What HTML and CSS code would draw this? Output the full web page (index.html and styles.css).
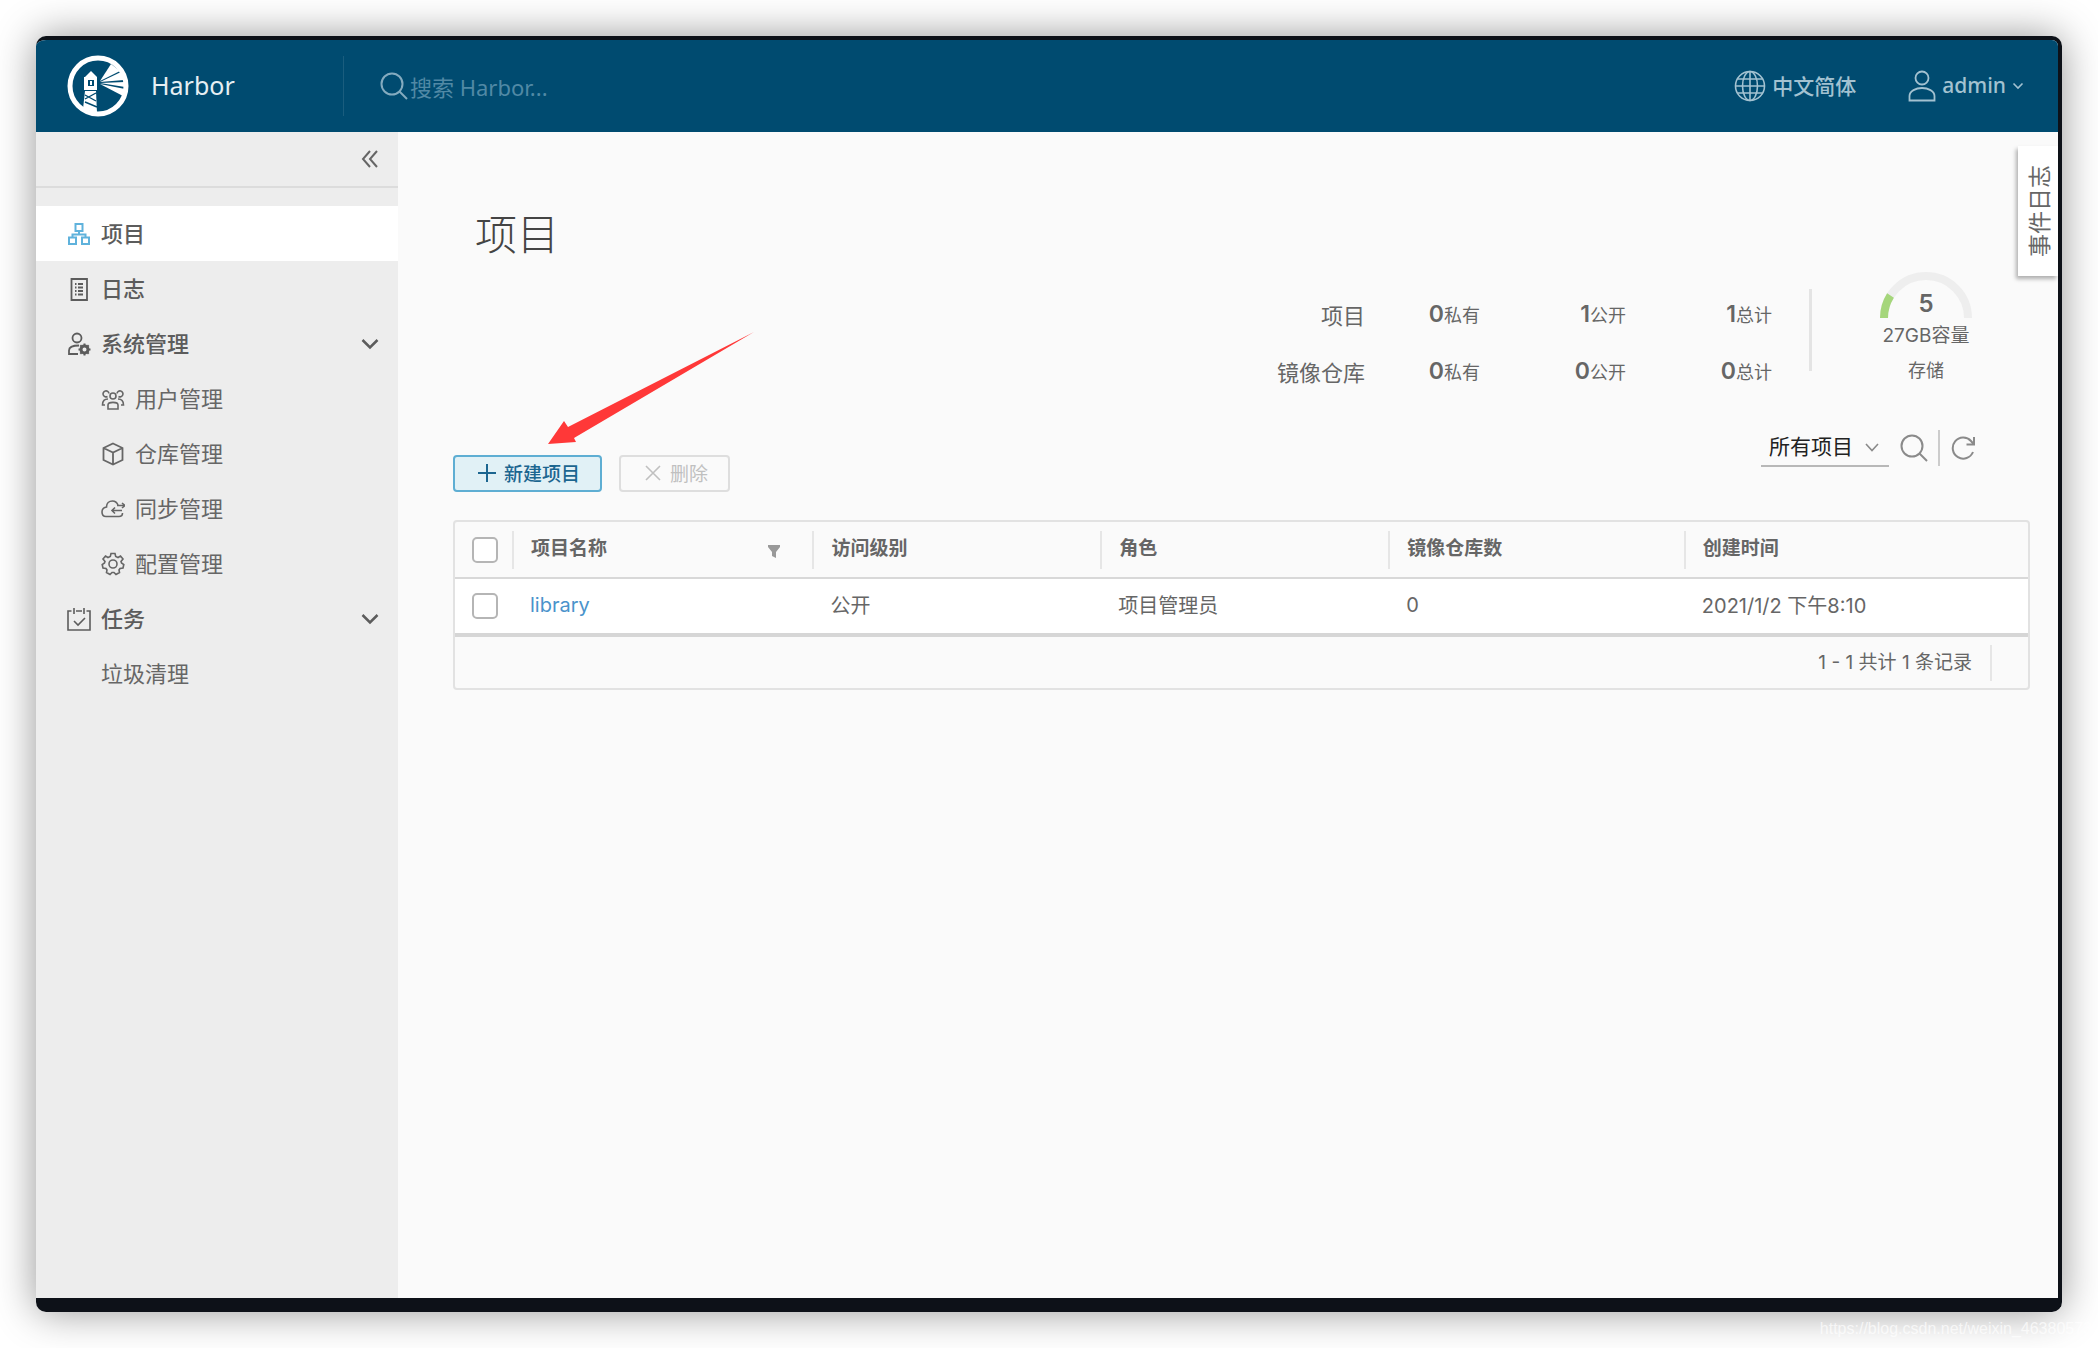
FILE: index.html
```html
<!DOCTYPE html>
<html lang="zh-CN">
<head>
<meta charset="utf-8">
<title>Harbor</title>
<link rel="stylesheet" href="styles.css">
</head>
<body>
<div class="window">
  <header class="header">
    <a class="brand" href="#">
      <svg class="logo" viewBox="0 0 62 62" fill="#fff">
        <circle cx="31" cy="31" r="28" fill="none" stroke="#fff" stroke-width="5"/>
        <path d="M33 26L44 9L53 16Z"/>
        <path d="M33 27L54 17L57 25Z"/>
        <path d="M33 28L58 27L58 32Z"/>
        <path d="M33 29L58 34L56 41Z"/>
        <path d="M24 16L30 22H18Z"/>
        <path d="M17 22H30V35H17Z"/>
        <path d="M21 25H27V31H21Z" fill="#004b70"/>
        <path d="M23 26H25V30H23Z"/>
        <path d="M18 36H29L30 58L16 54Z"/>
        <path d="M18 40L29 46M18 47L30 52M29 38L18 44" fill="none" stroke="#004b70" stroke-width="1.4"/>
      </svg>
      <span>Harbor</span>
    </a>
    <label class="search">
      <svg class="icon-search" viewBox="0 0 28 28" fill="none" stroke="currentColor" stroke-width="2"><circle cx="12" cy="12" r="10.5"/><path d="M19.500 19.500L27 27"/></svg>
      <input type="text" placeholder="搜索 Harbor..." aria-label="搜索 Harbor">
    </label>
    <button class="head-btn lang" type="button">
      <svg viewBox="0 0 32 32" width="32" height="32" fill="none" stroke="currentColor" stroke-width="1.6"><circle cx="16" cy="16" r="14.500"/><ellipse cx="16" cy="16" rx="7.500" ry="14.500"/><path d="M16 1.500V30.500M1.500 16H30.500M4 9H28M4 23H28"/></svg>
      <span>中文简体</span>
    </button>
    <button class="head-btn user" type="button">
      <svg viewBox="0 0 28 32" width="28" height="32" fill="none" stroke="currentColor" stroke-width="1.8"><circle cx="14" cy="8" r="6.500"/><path d="M1.500 30.500V26C1.500 21 8 18 14 18S26.500 21 26.500 26V30.500Z"/></svg>
      <span>admin</span>
      <svg class="caret" viewBox="0 0 12 8" width="12" height="8" fill="none" stroke="currentColor" stroke-width="1.6"><path d="M1.500 1.500L6 6L10.500 1.500"/></svg>
    </button>
  </header>
  <div class="body">
    <aside class="sidebar">
      <div class="collapse">
        <button type="button" aria-label="收起">
          <svg viewBox="0 0 18 18" width="18" height="18" fill="none" stroke="currentColor" stroke-width="2"><path d="M9 1L2 9L9 17M16 1L9 9L16 17"/></svg>
        </button>
      </div>
      <nav class="nav">
        <a class="item active" href="#">
          <svg viewBox="0 0 24 24" fill="none" stroke="#5fb2dc" stroke-width="2"><path d="M8.500 2H15.500V9H8.500ZM2 15.500H9V22H2ZM15 15.500H22V22H15ZM12 9V12M5.500 15.500V12.500H18.500V15.500"/></svg>
          <span>项目</span>
        </a>
        <a class="item" href="#">
          <svg viewBox="0 0 24 24" fill="none" stroke="currentColor" stroke-width="1.8"><path d="M4.500 2H20V23H4.500Z"/><path d="M8 7H9.500M11 7H16M8 10.500H9.500M11 10.500H16M8 14H9.500M11 14H16M8 17.500H9.500M11 17.500H16"/></svg>
          <span>日志</span>
        </a>
        <a class="item" href="#">
          <svg viewBox="0 0 24 24" fill="none" stroke="currentColor" stroke-width="1.800"><circle cx="10" cy="6" r="4.500"/><path d="M11 22H2V18.500C2 15 6 13.500 12 13.500"/><circle cx="17.500" cy="17.500" r="3.500" stroke-width="3"/><path d="M17.500 11.500V14M17.500 21V23.500M11.500 17.500H14M21 17.500H23.500M13.300 13.300L15 15M20 20L21.700 21.700M21.700 13.300L20 15M15 20L13.300 21.700" stroke-width="2"/></svg>
          <span>系统管理</span>
          <svg class="chev" viewBox="0 0 18 12" fill="none" stroke="currentColor" stroke-width="2.500"><path d="M1.500 2L9 9.500L16.500 2"/></svg>
        </a>
        <a class="item sub" href="#">
          <svg viewBox="0 0 24 24" fill="none" stroke="currentColor" stroke-width="1.600"><circle cx="12" cy="9" r="3"/><path d="M7 22V18C7 14.500 17 14.500 17 18V22Z"/><path d="M8 6.500A3 3 0 1 0 6.500 9.500M16 6.500A3 3 0 1 1 17.500 9.500M7 12C3.500 12 1.500 13.500 1.500 18H4M17 12C20.500 12 22.500 13.500 22.500 18H20"/></svg>
          <span>用户管理</span>
        </a>
        <a class="item sub" href="#">
          <svg viewBox="0 0 24 24" fill="none" stroke="currentColor" stroke-width="1.800"><path d="M12 1.500L21.500 6V18L12 22.500L2.500 18V6ZM2.500 6L12 10.500L21.500 6M12 10.500V22.500"/></svg>
          <span>仓库管理</span>
        </a>
        <a class="item sub" href="#">
          <svg viewBox="0 0 24 24" fill="none" stroke="currentColor" stroke-width="1.600"><path d="M17 8C15.500 4.500 13 4 11.500 4C8 4 5.500 6.500 5.500 10C2.500 10.500 1 12.500 1 15C1 17.500 2.500 19.500 5 19.500H18C20.500 19.500 21.500 18 21.500 16"/><path d="M24 8.500H16M21 6L24 8.500L21 11M11 13.500H21M14 10.500L11 13.500L14 16.500"/></svg>
          <span>同步管理</span>
        </a>
        <a class="item sub" href="#">
          <svg viewBox="0 0 24 24" fill="none" stroke="currentColor" stroke-width="1.600"><circle cx="12" cy="12" r="4"/><path d="M10 1.500H14L14.700 4.500L17 5.500L19.500 4L22 7L20 9.500L20.500 11L22.800 12.500L22 16L19 16.500L18 18L18.500 20.500L15 22.500L13 20.500H11L9 22.500L5.500 20.500L6 18L5 16.500L2 16L1.200 12.500L3.500 11L4 9.500L2 7L4.500 4L7 5.500L9.300 4.500Z"/></svg>
          <span>配置管理</span>
        </a>
        <a class="item" href="#">
          <svg viewBox="0 0 24 24" fill="none" stroke="currentColor" stroke-width="1.600"><path d="M4.500 4H1V23H23V4H19.500M9 4H15M7 1V7M17 1V7M7 14L11 18L18 11"/></svg>
          <span>任务</span>
          <svg class="chev" viewBox="0 0 18 12" fill="none" stroke="currentColor" stroke-width="2.500"><path d="M1.500 2L9 9.500L16.500 2"/></svg>
        </a>
        <a class="item plain" href="#"><span>垃圾清理</span></a>
      </nav>
    </aside>
    <main class="main">
      <h1>项目</h1>
      <section class="summary">
        <table class="stats">
          <tr><th scope="row">项目</th><td><b>0</b>私有</td><td><b>1</b>公开</td><td><b>1</b>总计</td></tr>
          <tr><th scope="row">镜像仓库</th><td><b>0</b>私有</td><td><b>0</b>公开</td><td><b>0</b>总计</td></tr>
        </table>
        <div class="rule"></div>
        <div class="quota">
          <div class="gauge">
            <svg viewBox="0 0 92 46" width="92" height="46" fill="none" stroke-width="8"><path d="M4 46A42 42 0 0 1 88 46" stroke="#eee"/><path d="M4 46A42 42 0 0 1 10.500 23.500" stroke="#a5d67b"/></svg>
            <b class="gauge-value">5</b>
          </div>
          <div class="capacity">27GB容量</div>
          <div class="storage">存储</div>
        </div>
      </section>
      <div class="toolbar">
        <button class="btn primary" type="button">
          <svg viewBox="0 0 20 20" width="20" height="20" fill="none" stroke="currentColor" stroke-width="2"><path d="M10 1V19M1 10H19"/></svg>新建项目
        </button>
        <button class="btn" type="button" disabled>
          <svg viewBox="0 0 20 20" width="20" height="20" fill="none" stroke="currentColor" stroke-width="1.600"><path d="M3 3L17 17M17 3L3 17"/></svg>删除
        </button>
        <div class="filters">
          <div class="select">
            <select aria-label="项目筛选"><option>所有项目</option></select>
            <svg viewBox="0 0 14 9" width="14" height="9" fill="none" stroke="currentColor" stroke-width="1.600"><path d="M1 1L7 7.500L13 1"/></svg>
          </div>
          <button class="tool" type="button" aria-label="搜索"><svg class="icon-search" viewBox="0 0 28 28" fill="none" stroke="currentColor" stroke-width="2"><circle cx="12" cy="12" r="10.500"/><path d="M19.500 19.500L27 27"/></svg></button>
          <span class="bar"></span>
          <button class="tool" type="button" aria-label="刷新"><svg viewBox="0 0 24 26" width="24" height="26" fill="none" stroke="currentColor" stroke-width="2"><path d="M22 17A10.500 10.500 0 1 1 20 6L22.500 9"/><path d="M23 2V9.500H15.500"/></svg></button>
        </div>
        <svg class="pointer" viewBox="0 0 206 112" width="206" height="112"><path d="M0 112L16 89L20 95L206 0L26 106L28 110Z" fill="#ff3838"/></svg>
      </div>
      <div class="grid">
        <table class="projects">
          <colgroup><col class="c-check"><col class="c-name"><col class="c-access"><col class="c-role"><col class="c-repos"><col class="c-time"></colgroup>
          <thead>
            <tr>
              <th class="check"><input type="checkbox" aria-label="全选"></th>
              <th><div class="head">项目名称<button class="funnel" type="button" aria-label="过滤"><svg viewBox="0 0 12 14" width="12" height="14" fill="#999"><path d="M0 1H12V3L8 8V14L4 12V8L0 3Z"/></svg></button></div></th>
              <th><div class="head">访问级别</div></th>
              <th><div class="head">角色</div></th>
              <th><div class="head">镜像仓库数</div></th>
              <th><div class="head">创建时间</div></th>
            </tr>
          </thead>
          <tbody>
            <tr>
              <td class="check"><input type="checkbox" aria-label="选择 library"></td>
              <td><a href="#">library</a></td>
              <td>公开</td>
              <td>项目管理员</td>
              <td>0</td>
              <td>2021/1/2 下午8:10</td>
            </tr>
          </tbody>
        </table>
        <div class="pager"><span>1 - 1 共计 1 条记录</span></div>
      </div>
      <button class="events" type="button">事件日志</button>
    </main>
  </div>
</div>
<div class="watermark">https://blog.csdn.net/weixin_46380573</div>
</body>
</html>
```
FILE: styles.css
```css
* {
  box-sizing: border-box;
}

body {
  position: relative;
  display: flex;
  min-height: 100vh;
  margin: 0;
  padding: 36px;
  overflow: hidden;
  background: #fff;
  color: #666;
  font-family: Inter, "Noto Sans CJK SC", sans-serif;
  font-size: 20px;
}

button,
input,
select {
  font: inherit;
}

button {
  padding: 0;
  border: 0;
  background: none;
  color: inherit;
}

a {
  color: inherit;
  text-decoration: none;
}

svg {
  display: block;
  flex: none;
}

.window {
  display: flex;
  flex: 1;
  flex-direction: column;
  overflow: hidden;
  border: solid #0d1118;
  border-width: 4px 4px 14px 0;
  border-radius: 10px;
  box-shadow: 0 0 40px rgba(0, 0, 0, 0.42);
}

/* header */
.header {
  display: flex;
  align-items: center;
  height: 92px;
  padding-right: 34px;
  background: #004b70;
  color: #a3c2d1;
  font-family: "Noto Sans", "Noto Sans CJK SC", sans-serif;
  font-size: 22px;
}

.brand {
  display: flex;
  align-items: center;
  gap: 22px;
  width: 307px;
  padding-left: 31px;
  color: #e6eff3;
  font-size: 25px;
}

.brand span,
.head-btn span {
  padding-bottom: 3px;
}

.logo {
  width: 62px;
  height: 62px;
}

.search {
  display: flex;
  flex: 1;
  align-items: center;
  gap: 2px;
  height: 60px;
  padding-left: 36px;
  border-left: 1px solid #1a5d7e;
  color: #84abbf;
}

.icon-search {
  width: 28px;
  height: 28px;
}

.search input {
  flex: 1;
  padding: 2px 0 0;
  border: 0;
  outline: 0;
  background: none;
  color: #fff;
}

.search input::placeholder {
  color: #5189a5;
  opacity: 1;
}

.head-btn {
  display: flex;
  align-items: center;
  gap: 6px;
  font-size: 21px;
  font-weight: 500;
}

.user {
  margin-left: 52px;
}

/* sidebar */
.body {
  display: flex;
  flex: 1;
}

.sidebar {
  width: 362px;
  background: #ededed;
  color: #666;
  font-size: 22px;
}

.collapse {
  display: flex;
  align-items: center;
  justify-content: flex-end;
  height: 56px;
  padding-right: 19px;
  border-bottom: 2px solid #dcdcdc;
}

.nav {
  padding-top: 18px;
}

.item {
  display: flex;
  align-items: center;
  gap: 10px;
  height: 55px;
  padding: 0 19px 0 31px;
  color: #5c5c5c;
  font-weight: 500;
}

.item span {
  padding-bottom: 3px;
}

.item svg {
  width: 24px;
  height: 24px;
}

.item .chev {
  width: 18px;
  height: 12px;
  margin-left: auto;
}

.active {
  background: #fff;
}

.sub {
  padding-left: 65px;
}

.sub,
.plain {
  color: #666;
  font-weight: 400;
}

.plain {
  padding-left: 65px;
}

/* content */
.main {
  position: relative;
  flex: 1;
  padding: 79px 28px 0 55px;
  background: #fafafa;
}

h1 {
  margin: 0;
  padding-left: 22px;
  color: #444;
  font-size: 42px;
  font-weight: 300;
  line-height: 48px;
}

.summary {
  display: flex;
  justify-content: flex-end;
  margin-top: 13px;
  padding-right: 49px;
}

.stats {
  margin-top: 14px;
  border-collapse: collapse;
  font-size: 18px;
  text-align: right;
}

.stats tr {
  height: 57px;
}

.stats th,
.stats td {
  width: 146px;
  padding: 0;
  line-height: 28px;
}

.stats th {
  padding-top: 3px;
  font-size: 22px;
  font-weight: 400;
  text-align: right;
}

.stats th + td {
  width: 115px;
}

.stats b {
  font-size: 23px;
  font-weight: 600;
}

.rule {
  width: 3px;
  height: 82px;
  margin: 17px 59px 0 37px;
  background: #e4e4e4;
}

.quota {
  width: 110px;
  text-align: center;
}

.gauge {
  position: relative;
  width: 92px;
  margin: 0 auto;
}

.gauge-value {
  position: absolute;
  right: 0;
  bottom: 0;
  left: 0;
  font-size: 24px;
  font-weight: 600;
  line-height: 28px;
}

.capacity {
  font-size: 19px;
  line-height: 36px;
}

.storage {
  font-size: 18px;
  line-height: 34px;
}

.toolbar {
  position: relative;
  display: flex;
  align-items: flex-end;
  gap: 17px;
  height: 64px;
  margin: 28px 0 28px;
}

.btn {
  display: flex;
  align-items: center;
  gap: 7px;
  height: 37px;
  padding: 0 20px 2px 22px;
  border: 2px solid #dedede;
  border-radius: 4px;
  color: #c0c0c0;
  font-size: 19px;
}

.primary {
  border-color: #5eaed3;
  background: #e1f1f6;
  color: #1c6690;
  font-weight: 500;
}

.filters {
  display: flex;
  align-items: center;
  align-self: flex-start;
  height: 40px;
  margin-left: auto;
  padding-right: 55px;
  color: #8a8a8a;
}

.select {
  display: flex;
  align-items: center;
  width: 128px;
  height: 38px;
  margin-right: 11px;
  padding-right: 10px;
  border-bottom: 2px solid #b8b8b8;
}

.select select {
  flex: 1;
  min-width: 0;
  padding: 0 0 2px 8px;
  appearance: none;
  border: 0;
  background: none;
  color: #222;
  font-size: 21px;
}

.bar {
  width: 2px;
  height: 36px;
  margin: 0 11px 0 10px;
  background: #ccc;
}

.pointer {
  position: absolute;
  bottom: 48px;
  left: 95px;
}

/* project table */
.grid {
  border: 2px solid #e2e2e2;
  border-radius: 4px;
}

.projects {
  width: 100%;
  table-layout: fixed;
  border-collapse: collapse;
  text-align: left;
}

.c-check {
  width: 57px;
}

.c-name {
  width: 19.1%;
}

.c-access,
.c-role {
  width: 18.3%;
}

.c-repos {
  width: 18.8%;
}

.projects th {
  height: 56px;
  padding: 0;
  border-bottom: 2px solid #d8d8d8;
  font-size: 19px;
  font-weight: 600;
}

.head {
  display: flex;
  align-items: center;
  height: 38px;
  padding: 0 32px 6px 17px;
  border-left: 2px solid #e6e6e6;
}

.funnel {
  margin-left: auto;
  padding-top: 8px;
}

.projects td {
  height: 57px;
  padding: 0 0 3px 18px;
  border-bottom: 4px solid #d6d6d6;
  background: #fff;
}

.projects td a {
  color: #4a93cb;
}

.projects .check {
  padding: 0 0 0 17px;
}

.check input {
  display: block;
  width: 26px;
  height: 26px;
  margin: 0;
  appearance: none;
  border: 2px solid #b5b5b5;
  border-radius: 5px;
  background: #fff;
}

.pager {
  display: flex;
  align-items: center;
  justify-content: flex-end;
  height: 51px;
  padding-right: 36px;
  font-size: 19px;
}

.pager span {
  padding-right: 18px;
  border-right: 2px solid #e6e6e6;
  line-height: 36px;
}

.events {
  position: absolute;
  top: 14px;
  right: 0;
  width: 40px;
  height: 130px;
  padding-right: 3px;
  background: #fff;
  box-shadow: 2px -3px 4px rgba(0, 0, 0, 0.3);
  font-size: 23px;
  line-height: 34px;
  text-orientation: sideways;
  transform: rotate(180deg);
  writing-mode: vertical-rl;
}

.watermark {
  position: absolute;
  right: 6px;
  bottom: 9px;
  color: rgba(255, 255, 255, 0.7);
  font-family: "Liberation Sans", sans-serif;
  font-size: 16px;
  line-height: 20px;
}
```
